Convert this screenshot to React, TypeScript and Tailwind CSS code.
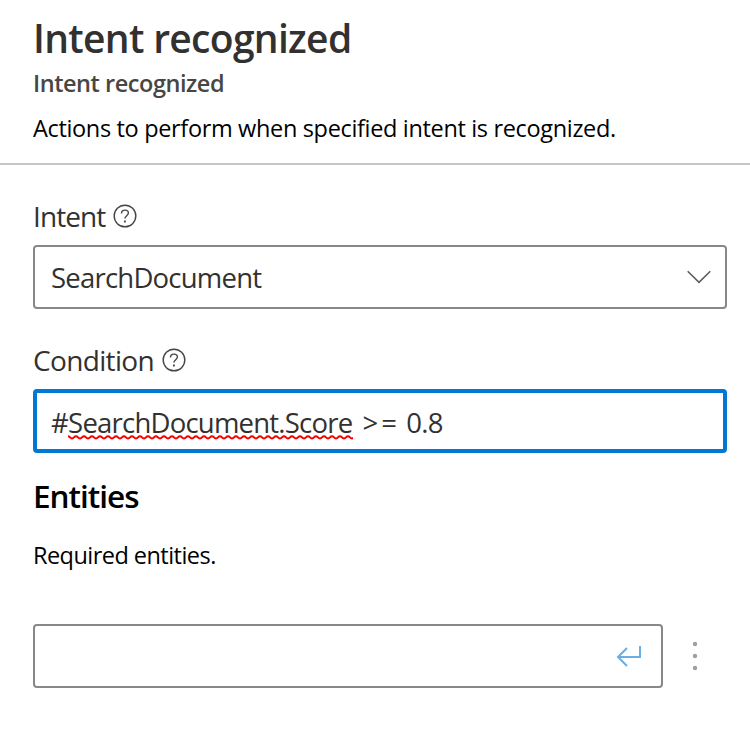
import React from "react";

function HelpIcon() {
  return (
    <svg width="24" height="24" viewBox="0 0 24 24" fill="none" stroke="#484644" strokeWidth="1.4">
      <circle cx="12" cy="12" r="10.8" />
      <path d="M8.5 9.4c0-2 1.4-3.3 3.4-3.3s3.5 1.2 3.5 3c0 2.5-3.5 2.8-3.5 5.5" />
      <path d="M11.9 16.5v1.9" strokeWidth="1.8" />
    </svg>
  );
}

function Squiggle() {
  return (
    <svg className="absolute left-0 top-[33px]" width="285" height="5">
      <defs>
        <pattern id="wave" width="8" height="5" patternUnits="userSpaceOnUse">
          <path d="M-4 3.6C-2 3.6 -2 1.3 0 1.3S2 3.6 4 3.6S6 1.3 8 1.3S10 3.6 12 3.6" fill="none" stroke="#ff0000" strokeWidth="2" />
        </pattern>
      </defs>
      <rect width="285" height="5" fill="url(#wave)" />
    </svg>
  );
}

function Label({ children, fit }: { children: string; fit: string }) {
  return (
    <div className="flex h-9 items-center text-[28px] leading-9 text-[#323130]">
      <span className={`shrink-0 whitespace-nowrap ${fit}`}>{children}</span>
      <HelpIcon />
    </div>
  );
}

export default function App() {
  return (
    <div className="h-[731px] w-[750px] overflow-hidden bg-white font-['Open_Sans','Noto_Sans',sans-serif] text-black">
      <header className="h-[165px] border-b-2 border-[#c8c6c4] pl-[33px] pt-3.5">
        <h1 className="h-12 whitespace-nowrap text-[39px] font-semibold leading-[48px] tracking-[-0.68px] text-[#323130]"><span>Intent recognized</span></h1>
        <h2 className="mt-[5px] h-8 whitespace-nowrap text-[23.5px] font-semibold leading-8 tracking-[-0.46px] text-[#484644]"><span>Intent recognized</span></h2>
        <p className="mt-[13px] whitespace-nowrap text-[23.5px] leading-8 tracking-[-0.34px]"><span>Actions to perform when specified intent is recognized.</span></p>
      </header>
      <main className="pl-[33px] pr-[23px] pt-[33px]">
        <Label fit="w-[80px] tracking-[-0.9px]">Intent</Label>
        <div className="mt-[11px] flex h-16 items-center justify-between rounded border-2 border-[#8a8886] pl-4 pr-3.5 text-[27.5px] text-[#323130]">
          <span className="pt-0.5 tracking-[-0.78px]">SearchDocument</span>
          <svg width="24" height="14" viewBox="0 0 24 14" fill="none" stroke="#605e5c" strokeWidth="1.6">
            <path d="M.7 1.2L12 12.4L23.3 1.2" />
          </svg>
        </div>
        <div className="mt-[33px]">
          <Label fit="w-[129px] tracking-[-0.65px]">Condition</Label>
        </div>
        <div className="mt-[11px] flex h-16 items-center whitespace-pre rounded border-4 border-[#0078d4] pl-3.5 pt-1 text-[27.5px] text-[#323130]">
          <span className="tracking-[-0.7px]">#</span>
          <span className="relative tracking-[-0.78px]">SearchDocument.Score<Squiggle /></span>
          <span className="ml-[3px]"> <span className="tracking-[3px]">&gt;</span>=<span className="ml-[3px] tracking-[-0.8px]"> 0.8</span></span>
        </div>
        <h3 className="mt-[23px] text-[31.5px] font-semibold leading-10 tracking-[-1px]"><span>Entities</span></h3>
        <p className="mt-[23px] text-[23.5px] leading-8 tracking-[-0.54px]"><span>Required entities.</span></p>
        <div className="mt-[53px] flex items-center">
          <div className="flex h-16 w-[630px] items-center justify-end rounded border-2 border-[#8a8886] pr-[19px] pt-0.5">
            <svg width="26" height="22" viewBox="0 0 26 22" fill="none" stroke="#69afe5" strokeWidth="2">
              <path d="M24 0V11H2M11 2L2 11L11 20" />
            </svg>
          </div>
          <svg className="ml-[29px]" width="6" height="30" viewBox="0 0 6 30" fill="#a19f9d">
            <circle cx="3" cy="3" r="2.2" />
            <circle cx="3" cy="15" r="2.2" />
            <circle cx="3" cy="27" r="2.2" />
          </svg>
        </div>
      </main>
    </div>
  );
}
